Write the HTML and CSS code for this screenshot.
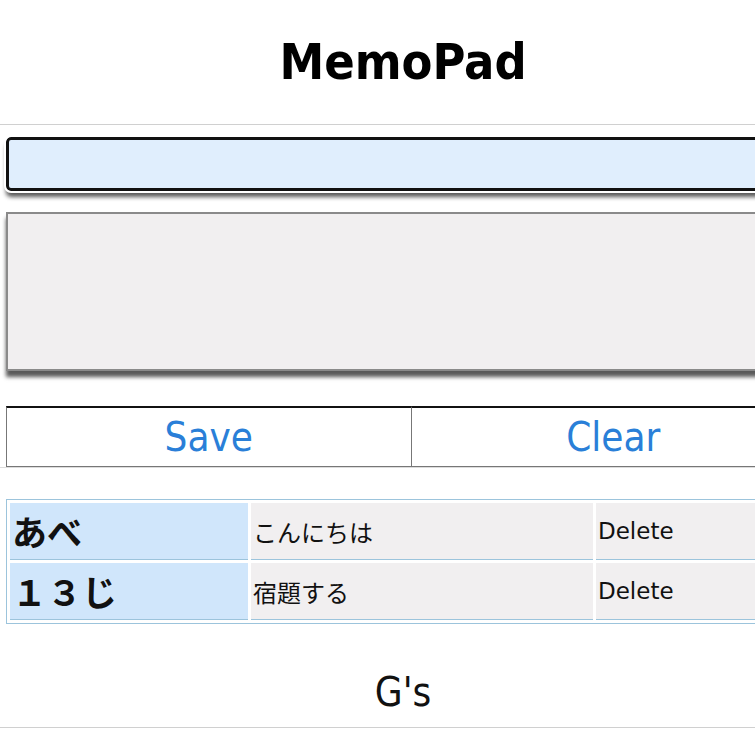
FILE: index.html
```html
<!DOCTYPE html>
<html lang="ja">
<head>
    <meta charset="UTF-8">
    <meta name="viewport" content="width=device-width, initial-scale=1.0">
    <title>MemoPad</title>
    <link rel="stylesheet" href="styles.css">
</head>
<body>
    <header class="header">
        <h1>MemoPad</h1>
    </header>

    <section class="editor">
        <input type="text" class="memo-title" id="key">
        <textarea class="memo-body" id="memo"></textarea>
        <div class="buttons">
            <button id="save">Save</button>
            <button id="clear">Clear</button>
        </div>
    </section>

    <section class="list-area">
        <table class="memo-list" id="list">
            <tr>
                <td class="key">あべ</td>
                <td class="value">こんにちは</td>
                <td class="action">Delete</td>
            </tr>
            <tr>
                <td class="key">１３じ</td>
                <td class="value">宿題する</td>
                <td class="action">Delete</td>
            </tr>
        </table>
    </section>

    <footer class="footer">
        <p>G's</p>
    </footer>
</body>
</html>
```

FILE: styles.css
```css
/* General */
html, body {
    overflow: hidden;
}

body {
    margin: 0;
    padding: 0;
    width: 822px;
    font-family: "DejaVu Sans", "Noto Sans CJK JP", sans-serif;
    background: #fff;
    color: #111;
}

/* Header */
.header {
    width: 806px;
    height: 124px;
    border-bottom: 1px solid #d0d0d0;
    display: flex;
    justify-content: center;
    align-items: center;
}

.header h1 {
    margin: 0;
    font-family: "DejaVu Sans Condensed", "DejaVu Sans", sans-serif;
    font-stretch: condensed;
    font-size: 50px;
    font-weight: bold;
    color: #000;
}

/* Editor */
.editor {
    padding: 12px 6px 0;
    border-bottom: 1px solid #dcdcdc;
}

.memo-title {
    display: block;
    box-sizing: border-box;
    width: 810px;
    height: 54px;
    margin: 0;
    border: 3px solid #111;
    border-radius: 5px;
    background: #e0eefd;
    outline: 2px solid #fff;
    box-shadow: 0 6px 4px rgba(0, 0, 0, 0.65);
}

.memo-body {
    display: block;
    box-sizing: border-box;
    width: 810px;
    height: 159px;
    margin: 21px 0 0;
    border: 2px solid #8a8a8a;
    border-radius: 0;
    background: #f1eff0;
    resize: none;
    box-shadow: 0 6px 4px rgba(0, 0, 0, 0.65);
}

/* Buttons */
.buttons {
    display: flex;
    width: 810px;
    margin-top: 35px;
}

.buttons button {
    flex: 1;
    height: 61px;
    margin: 0;
    padding: 0;
    border: 1px solid #777;
    border-top: 2px solid #111;
    background: #fff;
    color: #2a7fd8;
    font-family: "DejaVu Sans Condensed", "DejaVu Sans", sans-serif;
    font-stretch: condensed;
    font-size: 40px;
    cursor: pointer;
}

.buttons button + button {
    border-left: 1px solid #777;
    margin-left: -1px;
}

/* Memo list */
.list-area {
    padding: 31px 6px 0;
}

.memo-list {
    width: 810px;
    border: 1px solid #9cc4dc;
    border-spacing: 3px;
}

.memo-list td {
    height: 56px;
    padding: 0 2px;
    border-bottom: 1px solid #9cc4dc;
    font-size: 23px;
    background: #f1eff0;
}

.memo-list .key {
    width: 234px;
    background: #d0e6fb;
    font-family: "Noto Sans CJK JP", sans-serif;
    font-size: 35px;
    line-height: 46px;
    font-weight: bold;
    color: #111;
}

.memo-list .value {
    width: 338px;
    font-size: 24px;
}

/* Footer */
.footer {
    width: 806px;
    padding: 48px 0 15px;
    border-bottom: 1px solid #d0d0d0;
    text-align: center;
}

.footer p {
    margin: 0;
    line-height: 40px;
    font-family: "DejaVu Sans Condensed", "DejaVu Sans", sans-serif;
    font-stretch: condensed;
    font-size: 40px;
}
```
